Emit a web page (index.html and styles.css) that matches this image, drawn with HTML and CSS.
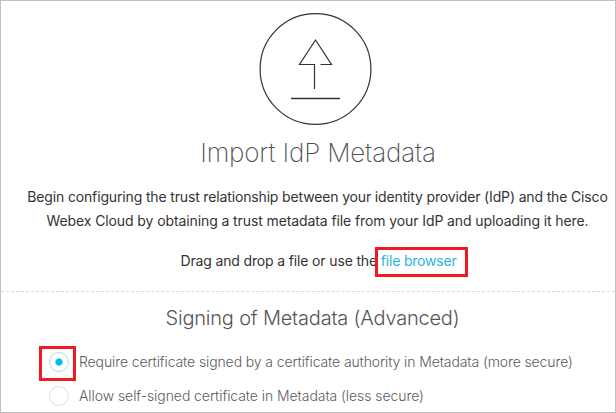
FILE: index.html
```html
<!DOCTYPE html>
<html lang="en">
<head>
<meta charset="utf-8">
<title>Import IdP Metadata</title>
<link rel="stylesheet" href="styles.css">
</head>
<body>
<main class="panel">
  <section class="import">
    <svg class="upload-icon" width="114" height="114" viewBox="0 0 114 114" fill="none" stroke="#333" stroke-width="1.2">
      <circle cx="56.5" cy="57" r="55.4"/>
      <path d="M55.5 77V52.5H40.5L56.5 28L72.5 52.5H61.5"/>
      <path d="M32 86.5H81" stroke-width="1.4"/>
    </svg>
    <h1 class="title">Import IdP Metadata</h1>
    <p class="intro"><span class="line-one">Begin configuring the trust relationship between your identity provider (IdP) and the Cisco</span><br><span class="line-two">Webex Cloud by obtaining a trust metadata file from your IdP and uploading it here.</span></p>
    <p class="drop"><span>Drag and drop a file or use the</span> <a class="browse">file browser</a></p>
  </section>
  <section class="signing">
    <h2 class="subtitle">Signing of Metadata (Advanced)</h2>
    <div class="option"><span class="radio selected"></span><span class="label label-one">Require certificate signed by a certificate authority in Metadata (more secure)</span></div>
    <div class="option"><span class="radio"></span><span class="label label-two">Allow self-signed certificate in Metadata (less secure)</span></div>
  </section>
</main>
</body>
</html>
```
FILE: styles.css
```css
*, *::after { box-sizing: border-box; }
body { margin: 0; background: #fff; font-family: Inter, "Liberation Sans", sans-serif; }
h1, h2, p { margin: 0; font-weight: 300; white-space: nowrap; text-align: center; }
.panel { width: 616px; height: 413px; border: 1px solid #bfbfbf; overflow: hidden; }
.import { height: 291px; padding-top: 11px; border-bottom: 1px dashed #d8d8d8; }
.upload-icon { display: block; margin-left: 258px; }
.title { height: 34px; margin-top: 10px; padding-left: 20px; font-size: 26px; line-height: 34px; font-weight: 200; color: #505050; letter-spacing: -0.17px; }
.intro, .drop { font-size: 14px; line-height: 24px; font-weight: 400; color: #333; letter-spacing: -0.15px; }
.intro { margin-top: 15px; padding-left: 19px; }
.line-two { letter-spacing: -0.1px; }
.drop { margin-top: 16px; padding-left: 21px; }
.browse { position: relative; color: #29b6dc; letter-spacing: -0.2px; }
.browse::after { content: ""; position: absolute; left: -6px; top: -5px; width: 93px; height: 30px; border: 3px solid #ed1c24; }
.signing { padding-left: 48px; }
.subtitle { margin: 12px 0 13px -39px; font-size: 20px; line-height: 28px; color: #555; letter-spacing: -0.2px; }
.option { display: flex; align-items: center; gap: 10px; height: 34px; font-size: 14px; font-weight: 350; color: #5c5c5c; white-space: nowrap; letter-spacing: -0.11px; }
.label { padding-bottom: 2px; }
.label-two { letter-spacing: -0.07px; }
.radio { position: relative; flex: none; width: 20px; height: 20px; border: 1px solid #ddd; border-radius: 50%; }
.selected { border-color: #b5dbe5; background: radial-gradient(circle, #00bceb 3.2px, transparent 4px); }
.selected::after { content: ""; position: absolute; left: -11px; top: -7px; width: 37px; height: 35px; border: 3px solid #ed1c24; }
```
